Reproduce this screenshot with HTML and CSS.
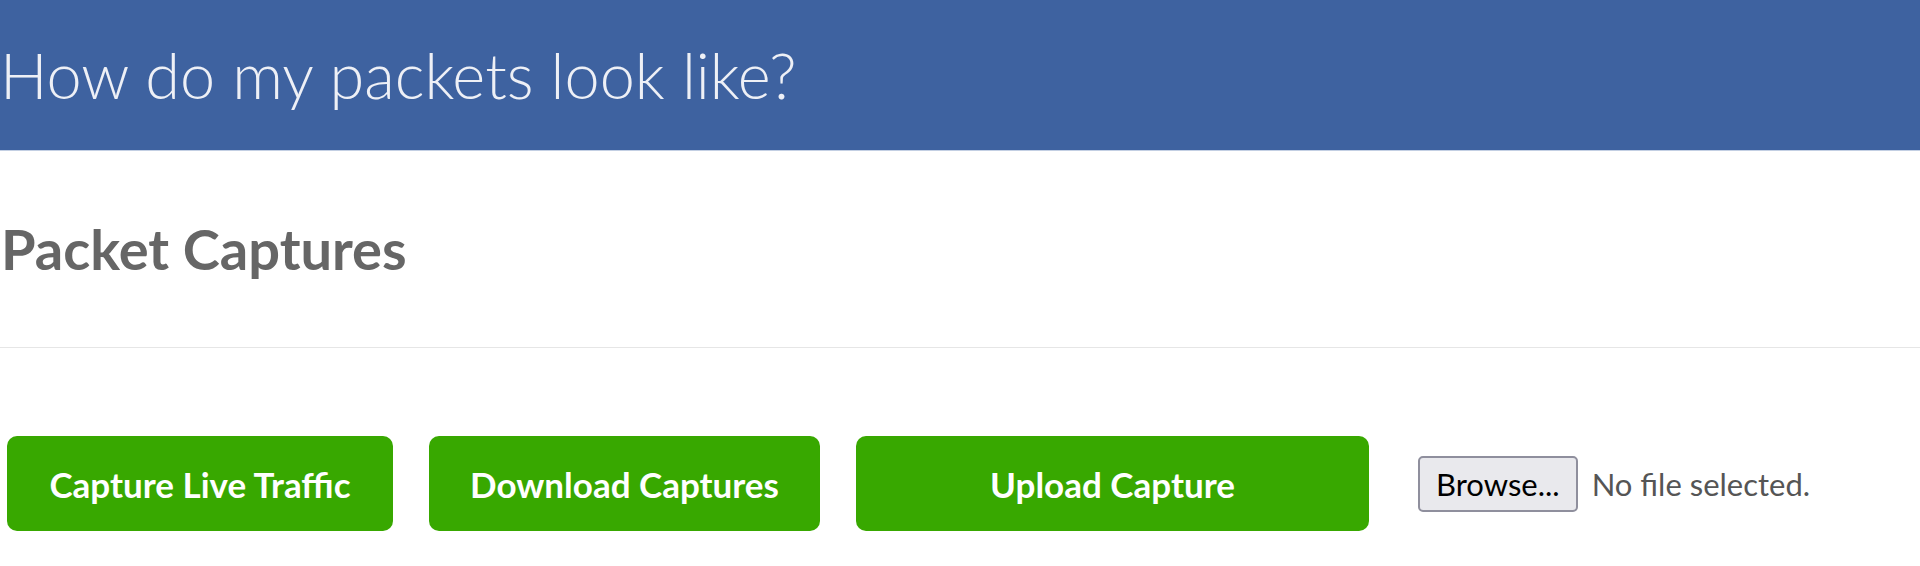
FILE: index.html
```html
<!DOCTYPE html>
<html lang="en">
<head>
  <meta charset="UTF-8">
  <meta name="viewport" content="width=device-width, initial-scale=1.0">
  <title>Packet Captures</title>
  <link rel="stylesheet" href="styles.css">
</head>
<body>
  <header id="banner">
    <h1 class="banner-title">How do my packets look like?</h1>
  </header>

  <main id="captures">
    <h2 class="section-title">Packet Captures</h2>
    <hr class="section-divider">

    <!-- 操作按钮 -->
    <div class="capture-actions">
      <button class="action-btn btn-live">Capture Live Traffic</button>
      <button class="action-btn btn-download">Download Captures</button>
      <button class="action-btn btn-upload">Upload Capture</button>

      <label class="file-picker">
        <span class="file-browse">Browse...</span>
        <span class="file-name">No file selected.</span>
      </label>
    </div>
  </main>
</body>
</html>
```

FILE: styles.css
```css
body {
  margin: 0;
  overflow: hidden;
  background-color: #fff;
  font-family: Lato, "Open Sans", sans-serif;
}

#banner {
  box-sizing: border-box;
  height: 151px;
  padding-top: 37px;
  background-color: #3e62a0;
  border-bottom: 1px solid #c3cfe3;
}

.banner-title {
  margin: 0;
  font-size: 63px;
  font-weight: 300;
  line-height: 1.2;
  color: #eef0f6;
}

.section-title {
  margin: 64px 0 0 0;
  padding-left: 1px;
  font-size: 56px;
  font-weight: bold;
  line-height: 1.2;
  color: #666;
}

.section-divider {
  margin: 65px 0 0 0;
  border: 0;
  height: 1px;
  background-color: #e6e6e6;
}

/* 按钮行 */
.capture-actions {
  display: flex;
  align-items: center;
  margin-top: 88px;
  padding-left: 7px;
}

.action-btn {
  box-sizing: border-box;
  height: 95px;
  margin-right: 36px;
  padding: 0 30px;
  border: 0;
  border-radius: 10px;
  background-color: #38a800;
  color: #fff;
  font-family: inherit;
  font-size: 35px;
  font-weight: bold;
  cursor: pointer;
}

.btn-live {
  width: 386px;
}

.btn-download {
  width: 391px;
}

.btn-upload {
  width: 513px;
  margin-right: 49px;
}

.file-picker {
  display: flex;
  align-items: center;
  font-size: 31px;
  cursor: pointer;
}

.file-browse {
  box-sizing: border-box;
  height: 56px;
  padding: 0 16px;
  display: flex;
  align-items: center;
  background-color: #e9e9ed;
  border: 2px solid #8f8f9d;
  border-radius: 5px;
  color: #000;
}

.file-name {
  margin-left: 14px;
  color: #555;
}
```
